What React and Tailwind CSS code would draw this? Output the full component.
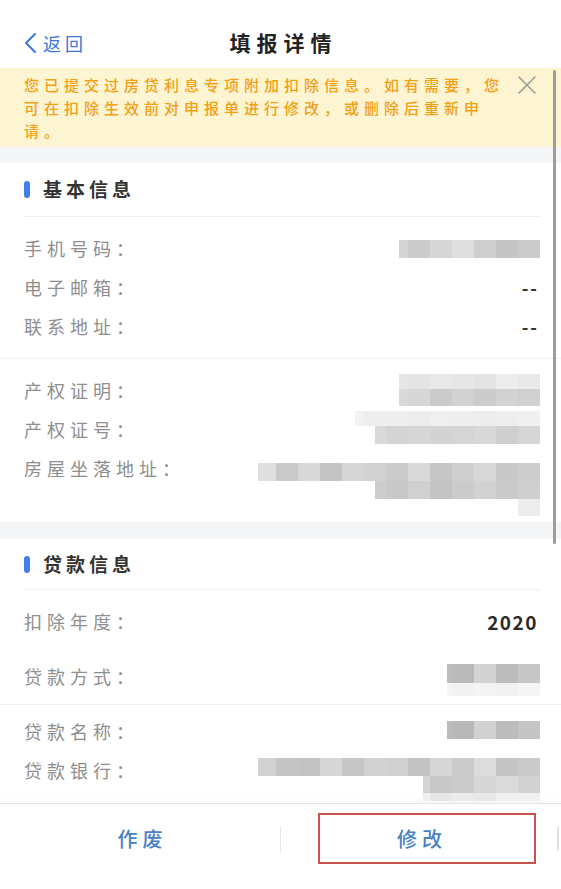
import React from "react";

const font = { fontFamily: '"Noto Sans CJK SC", "Noto Sans", sans-serif' };

// blurred-out values in the screenshot, drawn as grey mosaic cells
const mosaics = {
  phone: {
    mt: "mt-[3px]",
    rows: [
      { w: "w-[141px]", h: "h-[18px]", cells: ["bg-[#d4d4d4]", "bg-[#cccccc]", "bg-[#d6d6d6]", "bg-[#dfdfdf]", "bg-[#cfcfcf]", "bg-[#c5c5c5]", "bg-[#cbcbcb]"] },
    ],
  },
  cert: {
    mt: "mt-[-5px]",
    rows: [
      { w: "w-[141px]", h: "h-[15px]", cells: ["bg-[#e6e6e6]", "bg-[#e4e4e4]", "bg-[#e8e8e8]", "bg-[#e6e6e6]", "bg-[#e3e3e3]", "bg-[#ececec]", "bg-[#e9e9e9]"] },
      { w: "w-[141px]", h: "h-[17px]", cells: ["bg-[#d9d9d9]", "bg-[#d6d6d6]", "bg-[#cbcbcb]", "bg-[#d2d2d2]", "bg-[#cccccc]", "bg-[#d3d3d3]", "bg-[#d0d0d0]"] },
    ],
  },
  certNo: {
    mt: "mt-[-7px]",
    rows: [
      { w: "w-[185px]", h: "h-[15px]", cells: ["bg-[#f2f2f2]", "bg-[#eeeeee]", "bg-[#eeeeee]", "bg-[#ececec]", "bg-[#efefef]", "bg-[#eeeeee]", "bg-[#ededed]", "bg-[#eeeeee]", "bg-[#f0f0f0]"] },
      { w: "w-[165px]", h: "h-[18px]", cells: ["bg-[#d9d9d9]", "bg-[#d4d4d4]", "bg-[#d6d6d6]", "bg-[#d3d3d3]", "bg-[#d5d5d5]", "bg-[#d8d8d8]", "bg-[#cfcfcf]", "bg-[#d6d6d6]"] },
    ],
  },
  address: {
    mt: "mt-[6px]",
    rows: [
      { w: "w-[282px]", h: "h-[18px]", cells: ["bg-[#dedede]", "bg-[#c9c9c9]", "bg-[#d8d8d8]", "bg-[#c4c4c4]", "bg-[#d6d6d6]", "bg-[#d2d2d2]", "bg-[#cbcbcb]", "bg-[#d9d9d9]", "bg-[#c6c6c6]", "bg-[#cfcfcf]", "bg-[#d7d7d7]", "bg-[#c8c8c8]", "bg-[#cdcdcd]"] },
      { w: "w-[165px]", h: "h-[18px]", cells: ["bg-[#cdcdcd]", "bg-[#c8c8c8]", "bg-[#d0d0d0]", "bg-[#c4c4c4]", "bg-[#cbcbcb]", "bg-[#d2d2d2]", "bg-[#c9c9c9]", "bg-[#cfcfcf]"] },
      { w: "w-[22px]", h: "h-[17px]", cells: ["bg-[#ececec]"] },
    ],
  },
  loanType: {
    mt: "mt-[-1px]",
    rows: [
      { w: "w-[93px]", h: "h-[19px]", cells: ["bg-[#bdbdbd]", "bg-[#b9b9b9]", "bg-[#d3d3d3]", "bg-[#bcbcbc]", "bg-[#c6c6c6]"] },
      { w: "w-[93px]", h: "h-[13px]", cells: ["bg-[#f6f6f6]", "bg-[#f2f2f2]", "bg-[#f4f4f4]", "bg-[#f1f1f1]", "bg-[#f5f5f5]"] },
    ],
  },
  loanName: {
    mt: "mt-[1px]",
    rows: [
      { w: "w-[93px]", h: "h-[18px]", cells: ["bg-[#bbbbbb]", "bg-[#b8b8b8]", "bg-[#d1d1d1]", "bg-[#bcbcbc]", "bg-[#c5c5c5]"] },
    ],
  },
  bank: {
    mt: "mt-[-1px]",
    rows: [
      { w: "w-[282px]", h: "h-[18px]", cells: ["bg-[#d2d2d2]", "bg-[#c4c4c4]", "bg-[#c2c2c2]", "bg-[#d6d6d6]", "bg-[#c6c6c6]", "bg-[#d2d2d2]", "bg-[#d0d0d0]", "bg-[#c3c3c3]", "bg-[#d5d5d5]", "bg-[#cbcbcb]", "bg-[#dcdcdc]", "bg-[#c4c4c4]", "bg-[#cacaca]"] },
      { w: "w-[117px]", h: "h-[17px]", cells: ["bg-[#d4d4d4]", "bg-[#c7c7c7]", "bg-[#cbcbcb]", "bg-[#d6d6d6]", "bg-[#dadada]", "bg-[#d2d2d2]"] },
      { w: "w-[117px]", h: "h-[8px]", cells: ["bg-[#efefef]", "bg-[#e6e6e6]", "bg-[#ebebeb]", "bg-[#e8e8e8]", "bg-[#eeeeee]", "bg-[#f0f0f0]"] },
    ],
  },
};

function Mosaic({ data }) {
  return (
    <div className={`flex flex-col items-end ${data.mt}`}>
      {data.rows.map((row, i) => (
        <div key={i} className={`flex justify-end overflow-hidden ${row.w} ${row.h}`}>
          {row.cells.map((c, j) => (
            <div key={j} className={`w-[22px] shrink-0 h-full ${c}`} />
          ))}
        </div>
      ))}
    </div>
  );
}

function Row({ label, children, h = "h-[39px]", py = "py-[8px]" }) {
  return (
    <div className={`flex justify-between items-start ${h} ${py}`}>
      <div className="text-[18px] leading-[23px] tracking-[5px] text-[#8e8e8e] whitespace-nowrap">
        {label}
      </div>
      <div className="flex justify-end">{children}</div>
    </div>
  );
}

function Dash() {
  return (
    <div className="text-[18px] leading-[23px] font-semibold text-[#333] tracking-[2px] mr-[1px]">
      --
    </div>
  );
}

function SectionTitle({ text, h }) {
  return (
    <div className={`flex items-center border-b border-[#efefef] ${h}`}>
      <div className="w-[6px] h-[17px] rounded-full bg-[#3f7fe6] mr-[13px]" />
      <div className="text-[19px] font-bold tracking-[4px] text-[#333]">{text}</div>
    </div>
  );
}

export default function App() {
  return (
    <div className="w-[561px] h-[889px] flex flex-col bg-white overflow-hidden" style={font}>
      {/* header */}
      <div className="h-[68px] pt-[18px] flex items-center px-[23px] shrink-0">
        <div className="flex items-center text-[#3b78d6] w-[80px]">
          <svg width="14" height="22" viewBox="0 0 14 22" fill="none">
            <path d="M12 2 L3 11 L12 20" stroke="#3b78d6" strokeWidth="2" strokeLinecap="round" strokeLinejoin="round" />
          </svg>
          <span className="ml-[6px] text-[18px] tracking-[4px]">返回</span>
        </div>
        <div className="flex-1 flex justify-center">
          <span className="text-[21px] font-bold tracking-[6px] text-[#222] pl-[6px]">填报详情</span>
        </div>
        <div className="w-[80px]" />
      </div>

      <div className="flex-1 relative overflow-hidden">
        {/* notice banner */}
        <div className="bg-[#fdf4d2] h-[79px] pt-[5px] pl-[24px] pr-[24px] flex justify-between">
          <div className="text-[15px] leading-[23px] tracking-[5px] font-medium text-[#f2a014] whitespace-nowrap">
            <div>您已提交过房贷利息专项附加扣除信息。如有需要，您</div>
            <div>可在扣除生效前对申报单进行修改，或删除后重新申</div>
            <div>请。</div>
          </div>
          <svg className="mt-[2px] shrink-0" width="20" height="20" viewBox="0 0 20 20" fill="none">
            <path d="M2 2 L18 18 M18 2 L2 18" stroke="#9b9b9b" strokeWidth="1.6" strokeLinecap="round" />
          </svg>
        </div>

        <div className="h-[16px] bg-[#f4f5f7]" />

        {/* 基本信息 */}
        <div className="px-[24px] pr-[21px]">
          <SectionTitle text="基本信息" h="h-[54px]" />
        </div>
        <div className="px-[24px] pr-[21px] pt-[12px] pb-[12px] border-b border-[#efefef]">
          <Row label="手机号码：">
            <Mosaic data={mosaics.phone} />
          </Row>
          <Row label="电子邮箱：">
            <Dash />
          </Row>
          <Row label="联系地址：">
            <Dash />
          </Row>
        </div>
        <div className="px-[24px] pr-[21px] pt-[12px]">
          <Row label="产权证明：">
            <Mosaic data={mosaics.cert} />
          </Row>
          <Row label="产权证号：">
            <Mosaic data={mosaics.certNo} />
          </Row>
          <Row label="房屋坐落地址：" h="h-[73px]">
            <Mosaic data={mosaics.address} />
          </Row>
        </div>

        <div className="h-[17px] bg-[#f4f5f7]" />

        {/* 贷款信息 */}
        <div className="px-[24px] pr-[21px]">
          <SectionTitle text="贷款信息" h="h-[51px]" />
        </div>
        <div className="px-[24px] pr-[21px] pt-[4px] border-b border-[#efefef]">
          <Row label="扣除年度：" h="h-[55px]" py="py-[16px]">
            <div className="text-[19px] leading-[23px] font-semibold tracking-[1.5px] text-[#2b2b2b] mr-[2px]">2020</div>
          </Row>
          <Row label="贷款方式：" h="h-[55px]" py="py-[16px]">
            <Mosaic data={mosaics.loanType} />
          </Row>
        </div>
        <div className="px-[24px] pr-[21px] pt-[7px]">
          <Row label="贷款名称：">
            <Mosaic data={mosaics.loanName} />
          </Row>
          <Row label="贷款银行：">
            <Mosaic data={mosaics.bank} />
          </Row>
        </div>

        {/* scroll indicator */}
        <div className="absolute right-[5px] top-[2px] w-[3px] h-[474px] rounded-full bg-[#9c9c9c]" />
      </div>

      {/* bottom actions */}
      <div className="h-[86px] shrink-0 flex border-t border-[#e3e3e3] shadow-[0_-2px_4px_rgba(0,0,0,0.04)] bg-white">
        <div className="w-[280px] flex justify-center pt-[21px]">
          <span className="text-[20px] leading-[28px] tracking-[5px] pl-[5px] text-[#4a80c6] font-medium">作废</span>
        </div>
        <div className="w-px h-[26px] mt-[22px] bg-[#e8e8e8]" />
        <div className="flex-1 flex pl-[37px] pt-[9px]">
          <div className="w-[218px] h-[51px] border-2 border-[#c8524e] flex items-center justify-center">
            <span className="text-[20px] tracking-[5px] pr-[10px] text-[#4a80c6] font-medium">修改</span>
          </div>
          <div className="flex-1" />
          <div className="w-[2px] h-[24px] mt-[14px] mr-[2px] bg-[#e0e0e0]" />
        </div>
      </div>
    </div>
  );
}
